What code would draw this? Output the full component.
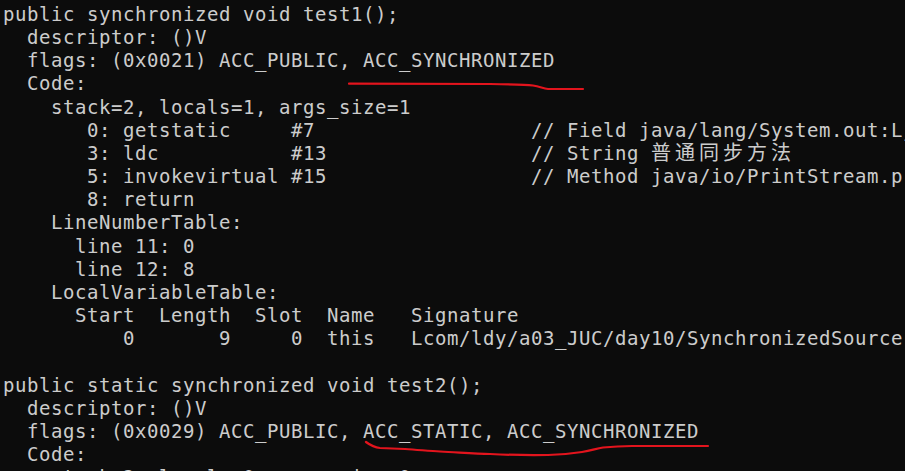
const lines: string[] = [
  "public synchronized void test1();",
  "  descriptor: ()V",
  "  flags: (0x0021) ACC_PUBLIC, ACC_SYNCHRONIZED",
  "  Code:",
  "    stack=2, locals=1, args_size=1",
  "       0: getstatic     #7                  // Field java/lang/System.out:Ljava/io/PrintStream;",
  "CJK",
  "       5: invokevirtual #15                 // Method java/io/PrintStream.println:(Ljava/lang/String;)V",
  "       8: return",
  "    LineNumberTable:",
  "      line 11: 0",
  "      line 12: 8",
  "    LocalVariableTable:",
  "      Start  Length  Slot  Name   Signature",
  "          0       9     0  this   Lcom/ldy/a03_JUC/day10/SynchronizedSource;",
  "",
  "public static synchronized void test2();",
  "  descriptor: ()V",
  "  flags: (0x0029) ACC_PUBLIC, ACC_STATIC, ACC_SYNCHRONIZED",
  "  Code:",
  "    stack=2, locals=0, args_size=0",
];

function Line({ text }: { text: string }) {
  if (text === "CJK") {
    return (
      <div className="whitespace-pre h-[23.16px]">
        {"       3: ldc           #13                 // String "}
        <span className="font-['Noto_Sans_CJK_SC',sans-serif] text-[20px] leading-[20px] tracking-[4px]">普通同步方法</span>
      </div>
    );
  }
  return <div className="whitespace-pre h-[23.16px]">{text || " "}</div>;
}

export default function App() {
  return (
    <div className="relative w-[905px] h-[471px] overflow-hidden bg-[#0c0c0c]">
      <div className="pl-[3px] pt-[3px] font-['DejaVu_Sans_Mono','Noto_Sans_CJK_SC',monospace] text-[19px] leading-[23.16px] tracking-[0.56px] text-[#cccccc]">
        {lines.map((l, i) => (
          <Line key={i} text={l} />
        ))}
      </div>

      {/* hand-drawn red underlines */}
      <svg className="absolute inset-0 pointer-events-none" width="905" height="471" viewBox="0 0 905 471">
        <path
          d="M349 83.7 L490 84 C510 84.3 525 84.6 533 85.5 C540 86.5 543 88.5 548 89 L583 89"
          fill="none"
          stroke="#e3141d"
          strokeWidth="2.2"
          strokeLinecap="round"
        />
        <path
          d="M366 442 C370 445 374 447.5 380 448 L405 449 C420 450 430 451 440 451.5 C460 452.5 475 453.5 490 454 C510 455 530 455.3 548 455 C562 454.5 572 453.5 582 452 C592 450.5 596 448.5 603 447.5 C615 446.5 622 446.2 632 446 L708 446"
          fill="none"
          stroke="#e3141d"
          strokeWidth="2.2"
          strokeLinecap="round"
        />
      </svg>
    </div>
  );
}
